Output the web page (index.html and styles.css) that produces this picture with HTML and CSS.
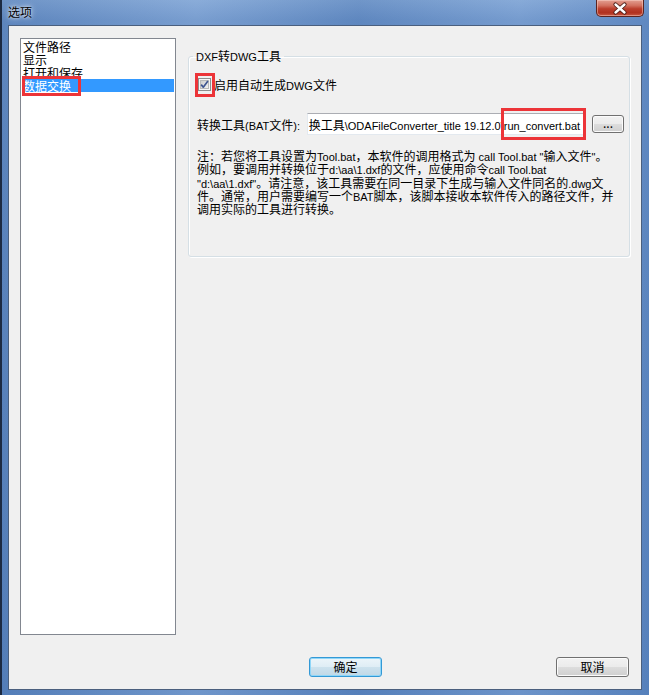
FILE: index.html
```html
<!DOCTYPE html>
<html lang="zh-CN">
<head>
<meta charset="utf-8">
<title>选项</title>
<link rel="stylesheet" href="styles.css">
</head>
<body>
<div class="window">
  <div class="titlebar">
    <span class="title">选项</span>
    <button class="close" aria-label="关闭">
      <svg width="46" height="16" viewBox="0 0 46 16">
        <path d="M18.5 4.5 L27.5 12.5 M27.5 4.5 L18.5 12.5" stroke="#4a1a14" stroke-width="4.2" stroke-linecap="round" fill="none"/>
        <path d="M18.5 4.5 L27.5 12.5 M27.5 4.5 L18.5 12.5" stroke="#ffffff" stroke-width="2.4" stroke-linecap="round" fill="none"/>
      </svg>
    </button>
  </div>
  <div class="client">
    <ul class="list">
      <li>文件路径</li>
      <li>显示</li>
      <li>打开和保存</li>
      <li class="selected"><span class="mark-list">数据交换</span></li>
    </ul>
    <div class="panel">
      <fieldset class="group">
        <legend><span class="lt">DXF</span>转<span class="lt">DWG</span>工具</legend>
        <label class="check-row">
          <span class="check">
            <svg width="13" height="13" viewBox="0 0 13 13">
              <defs>
                <linearGradient id="cb" x1="0" y1="0" x2="1" y2="1">
                  <stop offset="0" stop-color="#cbcbcb"/>
                  <stop offset="1" stop-color="#f3f3f3"/>
                </linearGradient>
              </defs>
              <rect x="0.5" y="0.5" width="12" height="12" fill="#f6f6f6" stroke="#8e8f8f"/>
              <rect x="2.5" y="2.5" width="8" height="8" fill="url(#cb)" stroke="#b9b9b9"/>
              <path d="M3.2 6.6 L5.3 9.2 L9.9 3.1" stroke="#3f5590" stroke-width="1.7" fill="none" stroke-linejoin="round"/>
            </svg>
          </span>
          <span>启用自动生成<span class="lt">DWG</span>文件</span>
        </label>
        <div class="tool-row">
          <span class="tool-label">转换工具<span class="lt">(BAT</span>文件<span class="lt">):</span></span>
          <div class="path">
            <div class="path-clip"><span class="path-text">换工具<span class="lt">\ODAFileConverter_title 19.12.0\run_convert.bat</span></span></div>
            <span class="path-mark"></span>
          </div>
          <button class="browse">...</button>
        </div>
        <p class="note">注：若您将工具设置为<span class="lt">Tool.bat</span>，本软件的调用格式为<span class="lt"> call Tool.bat "</span>输入文件<span class="lt">"</span>。<br>例如，要调用并转换位于<span class="lt">d:\aa\1.dxf</span>的文件，应使用命令<span class="lt">call Tool.bat</span><br><span class="lt">"d:\aa\1.dxf"</span>。请注意，该工具需要在同一目录下生成与输入文件同名的<span class="lt">.dwg</span>文<br>件。通常，用户需要编写一个<span class="lt">BAT</span>脚本，该脚本接收本软件传入的路径文件，并<br>调用实际的工具进行转换。</p>
      </fieldset>
    </div>
    <div class="actions">
      <button class="btn btn-default">确定</button>
      <button class="btn btn-cancel">取消</button>
    </div>
  </div>
</div>
</body>
</html>
```

FILE: styles.css
```css
html, body {
  margin: 0;
  padding: 0;
}

body {
  font-family: "Noto Sans CJK SC", "Liberation Sans", sans-serif;
  font-size: 12px;
  color: #000;
}

.lt {
  font-family: "Liberation Sans", "Noto Sans CJK SC", sans-serif;
  font-size: 11px;
  line-height: 0;
}

.window {
  width: 649px;
  height: 695px;
  box-sizing: border-box;
  display: flex;
  flex-direction: column;
  border-left: 2px solid #1c2a42;
  background:
    linear-gradient(90deg, rgba(40,70,120,0.15) 0%, rgba(255,255,255,0.12) 30%, rgba(40,70,120,0.12) 55%, rgba(255,255,255,0.1) 80%, rgba(40,70,120,0.1) 100%),
    linear-gradient(180deg, #7aa1d4 0%, #6690c9 20px, #5b87c3 100%);
}

.titlebar {
  height: 25px;
  display: flex;
  justify-content: space-between;
  align-items: flex-start;
  flex: none;
}

.title {
  margin: 4px 0 0 6px;
  line-height: 16px;
  font-size: 12px;
  color: #000;
  text-shadow: 0 0 6px rgba(255,255,255,0.9), 0 0 3px rgba(255,255,255,0.8);
}

.close {
  width: 48px;
  height: 17px;
  margin: 0 5px 0 0;
  padding: 0;
  box-sizing: border-box;
  border: 1px solid #5b2420;
  border-top: none;
  border-radius: 0 0 5px 5px;
  background: linear-gradient(180deg, #e3a092 0%, #d2705f 35%, #bb3e2c 55%, #b1311f 80%, #c95a44 100%);
  box-shadow: inset 0 0 0 1px rgba(255,220,210,0.45);
  display: flex;
  align-items: center;
  justify-content: center;
}

.client {
  flex: 1;
  margin: 0 7px 5px 6px;
  border: 1px solid #4a5f7e;
  background: #f0f0f0;
  padding: 12px 11px 12px 11px;
  display: grid;
  grid-template-columns: 156px 442px;
  grid-template-rows: 597px 20px;
  column-gap: 12px;
  row-gap: 22px;
}

.list {
  margin: 0;
  padding: 1px 0 0;
  list-style: none;
  background: #fff;
  border: 1px solid #828790;
  box-sizing: border-box;
  overflow: hidden;
}

.list li {
  height: 13px;
  line-height: 13px;
  padding-left: 2px;
  white-space: nowrap;
}

.list li.selected {
  background: #3399ff;
  color: #fff;
  margin: 0 1px;
  padding-left: 1px;
}

.mark-list {
  position: relative;
  display: inline-block;
}

.mark-list::after {
  content: "";
  position: absolute;
  left: -1px;
  right: -10px;
  top: -3px;
  bottom: -4px;
  border: 3px solid #ec3438;
}

.panel {
  min-width: 0;
}

.group {
  margin: 11px 0 0;
  padding: 0 5px 41px 8px;
  border: 1px solid #d5dfe5;
  border-radius: 3px;
  box-shadow: inset 1px 1px 0 #fff, 1px 1px 0 #fff;
  min-width: 0;
}

.group legend {
  margin-left: -4px;
  padding: 0 3px;
  line-height: 14px;
  font-size: 12px;
}

.check-row {
  display: flex;
  align-items: center;
  height: 16px;
  margin-top: 13px;
  gap: 3px;
}

.check {
  position: relative;
  width: 13px;
  height: 13px;
  margin-left: 1px;
  display: block;
}

.check svg {
  display: block;
}

.check::after {
  content: "";
  position: absolute;
  left: -3px;
  right: -4px;
  top: -5px;
  bottom: -6px;
  border: 3px solid #ec3438;
}

.tool-row {
  display: flex;
  align-items: center;
  height: 22px;
  margin-top: 21px;
}

.tool-label {
  white-space: nowrap;
  width: 110px;
}

.path {
  position: relative;
  width: 279px;
  height: 22px;
  box-sizing: border-box;
  border: 1px solid #e3e9ef;
  border-top-color: #abadb3;
  background: #fff;
}

.path-clip {
  height: 100%;
  overflow: hidden;
  display: flex;
  align-items: center;
  padding: 0 2px 0 1px;
}

.path-text {
  white-space: nowrap;
  flex: none;
}

.path-mark {
  position: absolute;
  right: -2px;
  width: 85px;
  top: -6px;
  bottom: -6px;
  box-sizing: border-box;
  border: 3px solid #ec3438;
}

.browse {
  width: 32px;
  height: 18px;
  margin-left: 7px;
  padding: 0 0 3px;
  box-sizing: border-box;
  font-family: inherit;
  font-size: 12px;
  line-height: 12px;
  border: 1px solid #707070;
  border-radius: 3px;
  background: linear-gradient(180deg, #f2f2f2 0%, #ebebeb 50%, #dddddd 50%, #cfcfcf 100%);
  box-shadow: inset 0 0 0 1px #fbfbfb;
}

.note {
  margin: 14px 0 0;
  line-height: 13.3px;
  white-space: nowrap;
}

.actions {
  grid-column: 1 / -1;
  display: flex;
}

.btn {
  width: 73px;
  height: 20px;
  padding: 0;
  box-sizing: border-box;
  font-family: inherit;
  font-size: 12px;
  line-height: 16px;
  color: #000;
  border-radius: 3px;
}

.btn-default {
  margin-left: 289px;
  border: 1px solid #3399d6;
  background: linear-gradient(180deg, #ecf5fa 0%, #dfedf5 50%, #cde2ee 50%, #c0d8e6 100%);
  box-shadow: inset 0 0 0 1px #8fd6f8;
}

.btn-cancel {
  margin-left: auto;
  margin-right: 1px;
  border: 1px solid #707070;
  background: linear-gradient(180deg, #f2f2f2 0%, #ebebeb 50%, #dddddd 50%, #cfcfcf 100%);
  box-shadow: inset 0 0 0 1px #fbfbfb;
}
```
